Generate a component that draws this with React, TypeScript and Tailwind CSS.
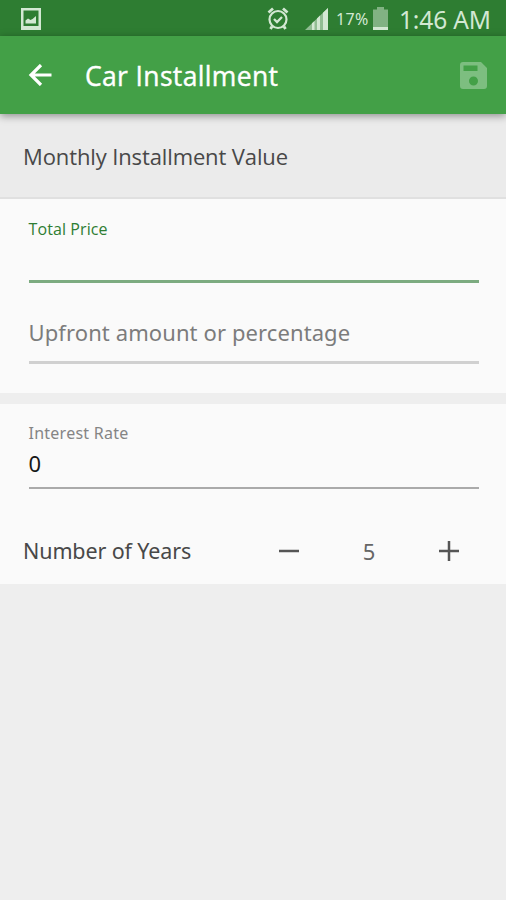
import { useState } from "react";

function StatusBar() {
  return (
    <div className="h-9 bg-[#2e7d32] flex items-center pl-[21px] pr-[15px] text-[#d3e8d3]">
      <svg className="w-5 h-[22px] mt-0.5" viewBox="0 0 20 22" fill="none">
        <rect x="1.25" y="1.25" width="17.5" height="19.5" stroke="currentColor" strokeWidth="2.500" />
        <path d="M1 18h18v3.500H1zM4.500 15.500v-3l2.500-2 2.500 1.500 2-1 3.500-3V15.500z" fill="currentColor" />
      </svg>
      <svg className="w-[22px] h-6 ml-auto mt-0.5" viewBox="0 0 22 24" fill="none" stroke="currentColor">
        <circle cx="11" cy="12.500" r="8.500" strokeWidth="2.200" />
        <path d="M7 12l3 3 5-5" strokeWidth="2.300" />
        <path d="M1.500 5.500l4.500-4M20.500 5.500l-4.500-4M5 19.500l-1.500 2.500M17 19.500l1.500 2.500" strokeWidth="2.800" />
      </svg>
      <svg className="w-[23px] h-[22px] ml-4 mt-0.5" viewBox="0 0 23 22" fill="currentColor">
        <path d="M0 22L23 0v22z" opacity=".6" />
        <path d="M7 22v-6.700l2.500-2.400V22zM12 22V10.500l3-2.900V22zM18 22V4.800L23 0v22z" />
      </svg>
      <span className="ml-2 w-[34px] text-[16px] leading-9 tracking-[0.3px] whitespace-nowrap mt-0.5">17%</span>
      <svg className="w-[15px] h-[23px] ml-[3px]" viewBox="0 0 15 23" fill="currentColor">
        <path d="M0 2.500h4V0h7v2.500h4V19H0z" opacity=".5" />
        <path d="M0 19.500h15V23H0z" />
      </svg>
      <span className="ml-[11px] w-[92px] text-[24.5px] leading-9 tracking-[-0.15px] whitespace-nowrap mt-[3px]">1:46 AM</span>
    </div>
  );
}

function AppBar() {
  return (
    <header className="relative z-10 h-[78px] bg-[#43a047] flex items-center pl-7 pr-[19px] text-white shadow-[0_2px_8px_rgba(0,0,0,0.4)]">
      <button aria-label="Back">
        <svg className="w-6 h-[22px]" viewBox="0 0 24 22" fill="none" stroke="currentColor" strokeWidth="3.200">
          <path d="M23.500 11H2.500M13 1L3 11l10 10" />
        </svg>
      </button>
      <h1 className="ml-[33px] mt-0.5 text-[26.5px] leading-9 tracking-[0.35px] [-webkit-text-stroke:0.4px_white] font-['Open_Sans',sans-serif] whitespace-nowrap">
        Car Installment
      </h1>
      <button aria-label="Save" className="ml-auto text-[#7dbe80]">
        <svg className="w-[27px] h-[27px]" viewBox="0 0 27 27" fill="currentColor" fillRule="evenodd">
          <path d="M3 0h18l6 6v18a3 3 0 0 1-3 3H3a3 3 0 0 1-3-3V3a3 3 0 0 1 3-3zM3.500 3.500v5.500h14V3.500zM13.500 14.500a4.500 4.500 0 1 0 0 9 4.500 4.500 0 0 0 0-9z" />
        </svg>
      </button>
    </header>
  );
}

export default function App() {
  const [years, setYears] = useState(5);

  return (
    <div className="w-full h-[900px] bg-[#eeeeee] font-['Noto_Sans',sans-serif] overflow-hidden">
      <StatusBar />
      <AppBar />

      <h2 className="h-[85px] bg-[#ebebeb] border-b-2 border-[#e0e0e0] pl-[23px] pt-px flex items-center text-[22px] tracking-[-0.12px] text-[#484848] font-['Open_Sans',sans-serif] whitespace-nowrap">
        Monthly Installment Value
      </h2>

      {/* Price */}
      <section className="h-[194px] bg-[#fafafa] pl-[28.5px] pr-[27.5px] pt-[18px]">
        <div className="h-[66px] border-b-3 border-[#7cab80]">
          <label className="block text-[16px] leading-6 tracking-[0.1px] text-[#2e7d32] font-['Open_Sans',sans-serif]">Total Price</label>
        </div>
        <div className="h-[81px] pt-[31px] border-b-3 border-[#d0d0d0]">
          <label className="block text-[22px] leading-9 tracking-[0.1px] text-[#7c7c7c] whitespace-nowrap">Upfront amount or percentage</label>
        </div>
      </section>

      {/* Interest and term */}
      <section className="mt-[11px] h-[180px] bg-[#fafafa] pt-[17px]">
        <div className="ml-[28.5px] mr-[27.5px] h-[68px] border-b-2 border-[#aaaaaa]">
          <label className="block text-[16px] leading-6 tracking-[0.25px] text-[#858585]">Interest Rate</label>
          <div className="text-[22px] leading-9 text-[#171717]">0</div>
        </div>
        <div className="mt-[44px] pl-[23px] pr-[47px] h-9 flex items-center text-[22px] text-[#484848]">
          <span className="w-[256px] pt-px text-[21.5px] tracking-[-0.12px] whitespace-nowrap">Number of Years</span>
          <button aria-label="Decrease" onClick={() => setYears(years - 1)}>
            <svg className="w-5 h-5" viewBox="0 0 20 20" stroke="#555555" strokeWidth="2.500">
              <path d="M0 10h20" />
            </svg>
          </button>
          <span className="flex-1 text-center text-[#666666]">{years}</span>
          <button aria-label="Increase" onClick={() => setYears(years + 1)}>
            <svg className="w-5 h-5" viewBox="0 0 20 20" stroke="#555555" strokeWidth="2.500">
              <path d="M0 10h20M10 0v20" />
            </svg>
          </button>
        </div>
      </section>
    </div>
  );
}
